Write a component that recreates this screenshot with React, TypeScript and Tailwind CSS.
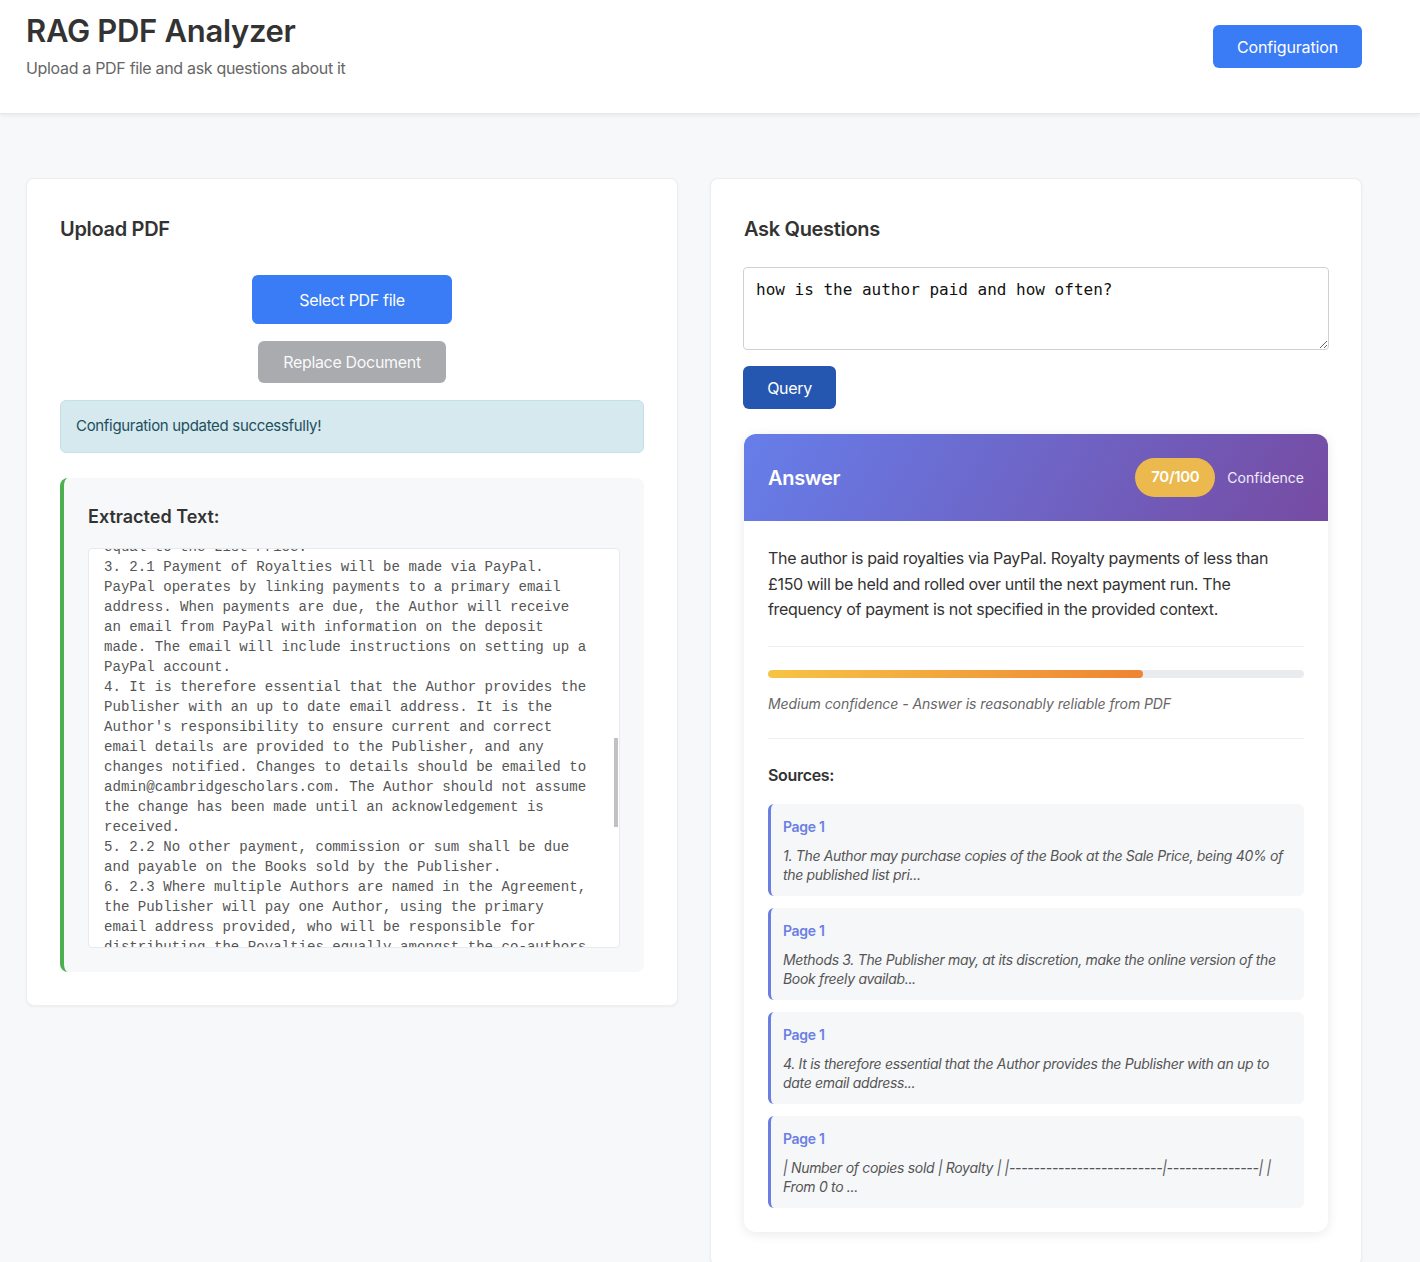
import React from "react";

const extractedLines = [
  "equal to the List Price.",
  "3. 2.1 Payment of Royalties will be made via PayPal.",
  "PayPal operates by linking payments to a primary email",
  "address. When payments are due, the Author will receive",
  "an email from PayPal with information on the deposit",
  "made. The email will include instructions on setting up a",
  "PayPal account.",
  "4. It is therefore essential that the Author provides the",
  "Publisher with an up to date email address. It is the",
  "Author's responsibility to ensure current and correct",
  "email details are provided to the Publisher, and any",
  "changes notified. Changes to details should be emailed to",
  "admin@cambridgescholars.com. The Author should not assume",
  "the change has been made until an acknowledgement is",
  "received.",
  "5. 2.2 No other payment, commission or sum shall be due",
  "and payable on the Books sold by the Publisher.",
  "6. 2.3 Where multiple Authors are named in the Agreement,",
  "the Publisher will pay one Author, using the primary",
  "email address provided, who will be responsible for",
  "distributing the Royalties equally amongst the co-authors,",
  "unless otherwise agreed in writing.",
];

const sources = [
  {
    page: "Page 1",
    text: "1. The Author may purchase copies of the Book at the Sale Price, being 40% of the published list pri...",
  },
  {
    page: "Page 1",
    text: "Methods 3. The Publisher may, at its discretion, make the online version of the Book freely availab...",
  },
  {
    page: "Page 1",
    text: "4. It is therefore essential that the Author provides the Publisher with an up to date email address...",
  },
  {
    page: "Page 1",
    text: "| Number of copies sold | Royalty | |-------------------------|---------------| | From 0 to ...",
  },
];

export default function App() {
  return (
    <div
      className="min-h-screen bg-[#f7f8fa] text-[#333] tracking-[-0.02em]"
      style={{ fontFamily: "Inter, 'Noto Sans', sans-serif" }}
    >
      {/* Header */}
      <header className="bg-white h-[114px] border-b border-[#e4e6ea] shadow-[0_2px_4px_rgba(0,0,0,0.06)]">
        <div className="w-[1336px] ml-[26px] flex justify-between items-start">
          <div className="pt-[12px]">
            <h1 className="text-[31px] leading-[38px] font-semibold text-[#333] tracking-[-0.01em]">
              RAG PDF Analyzer
            </h1>
            <p className="mt-[6px] text-[16px] leading-[24px] text-[#666]">
              Upload a PDF file and ask questions about it
            </p>
          </div>
          <button className="mt-[25px] w-[149px] h-[43px] rounded-[6px] bg-[#3a7bf6] text-white text-[16px] tracking-[-0.01em]">
            Configuration
          </button>
        </div>
      </header>

      {/* Main */}
      <main className="pt-[64px] pb-[40px]">
        <div className="w-[1336px] ml-[26px] grid grid-cols-2 gap-8 items-start">
          {/* Left panel */}
          <section className="bg-white rounded-lg border border-[#eceef1] shadow-[0_1px_3px_rgba(0,0,0,0.05)] p-[33px]">
            <h2 className="text-[20px] leading-[34px] font-semibold text-[#333]">Upload PDF</h2>
            <button className="block mx-auto mt-[29px] w-[200px] h-[49px] rounded-[6px] bg-[#3a7bf6] text-white text-[16px]">
              Select PDF file
            </button>
            <button className="block mx-auto mt-[17px] w-[188px] h-[42px] rounded-[6px] bg-[#a9abaf] text-white/95 text-[16px]">
              Replace Document
            </button>
            <div className="mt-[17px] h-[53px] rounded-[6px] bg-[#d5e9ef] border border-[#c4e1e9] pl-[15px] flex items-center text-[15px] text-[#1e4f5c]">
              Configuration updated successfully!
            </div>
            <div className="mt-[25px] bg-[#f7f8fa] border-l-4 border-[#4caf50] rounded-lg pl-6 pr-6 pt-[25px] pb-[24px]">
              <h3 className="text-[18px] leading-7 font-semibold text-[#333] tracking-normal">Extracted Text:</h3>
              <div className="relative mt-[17px] h-[400px] bg-white border border-[#e8eaee] rounded-[4px] overflow-hidden">
                <div
                  className="mt-[-12px] pl-[15px] text-[14.1px] leading-[20px] text-[#555] whitespace-pre tracking-normal"
                  style={{ fontFamily: "'Liberation Mono', 'Courier New', monospace" }}
                >
                  {extractedLines.map((l, i) => (
                    <div key={i}>{l}</div>
                  ))}
                </div>
                <div className="absolute right-[1px] top-[189px] w-[4px] h-[89px] bg-[#c1c1c1]" />
              </div>
            </div>
          </section>

          {/* Right panel */}
          <section className="bg-white rounded-lg border border-[#eceef1] shadow-[0_1px_3px_rgba(0,0,0,0.05)] p-[33px]">
            <h2 className="text-[20px] leading-[34px] font-semibold text-[#333]">Ask Questions</h2>
            <textarea
              defaultValue="how is the author paid and how often?"
              className="mt-[21px] -ml-px block w-[calc(100%+2px)] h-[83px] border border-[#cfd1d5] rounded-[4px] px-3 pt-[12px] text-[16px] leading-[20px] text-[#111] outline-none tracking-normal"
              style={{ fontFamily: "'DejaVu Sans Mono', monospace" }}
            />
            <button className="mt-[16px] -ml-px w-[93px] h-[43px] rounded-[6px] bg-[#2557b0] text-white text-[16px]">
              Query
            </button>

            {/* Answer card */}
            <div className="mt-[25px] rounded-[12px] overflow-hidden bg-white shadow-[0_2px_12px_rgba(0,0,0,0.09)]">
              <div className="h-[87px] px-6 flex items-center justify-between bg-[linear-gradient(120deg,#667eea_0%,#764ba2_100%)]">
                <span className="text-[20px] font-semibold text-white">Answer</span>
                <div className="flex items-center gap-3">
                  <span className="w-[80px] h-[39px] rounded-full bg-[#ebb94d] flex items-center justify-center text-[15px] font-semibold text-white">
                    70/100
                  </span>
                  <span className="text-[14px] text-white/90 tracking-normal">Confidence</span>
                </div>
              </div>
              <div className="px-6 pt-[25px] pb-6">
                <p className="text-[16px] leading-[25.6px] text-[#333]">
                  The author is paid royalties via PayPal. Royalty payments of less than £150 will be held and rolled over until the next payment run. The frequency of payment is not specified in the provided context.
                </p>
                <div className="mt-[23px] border-t border-[#eeeff1]" />
                <div className="mt-[23px] h-2 rounded-full bg-[#eaebef] overflow-hidden">
                  <div
                    className="h-full rounded-full bg-[linear-gradient(90deg,#f6c445_0%,#ee8434_100%)]"
                    style={{ width: "70%" }}
                  />
                </div>
                <p className="mt-[16px] text-[14px] leading-[20px] italic text-[#666] tracking-[-0.005em]">
                  Medium confidence - Answer is reasonably reliable from PDF
                </p>
                <div className="mt-[24px] border-t border-[#eeeff1]" />
                <h4 className="mt-[24px] text-[16px] leading-6 font-semibold text-[#333]">Sources:</h4>
                <div className="mt-[17px] flex flex-col gap-3">
                  {sources.map((s, i) => (
                    <div
                      key={i}
                      className="h-[92px] rounded-[6px] bg-[#f6f7f9] border-l-[3px] border-[#6b7fe3] pl-3 pr-3 pt-[13px]"
                    >
                      <div className="text-[14px] leading-5 font-semibold text-[#6b7fe3]">{s.page}</div>
                      <p className="mt-[9px] text-[14px] leading-[19px] italic text-[#555]">{s.text}</p>
                    </div>
                  ))}
                </div>
              </div>
            </div>
          </section>
        </div>
      </main>
    </div>
  );
}
